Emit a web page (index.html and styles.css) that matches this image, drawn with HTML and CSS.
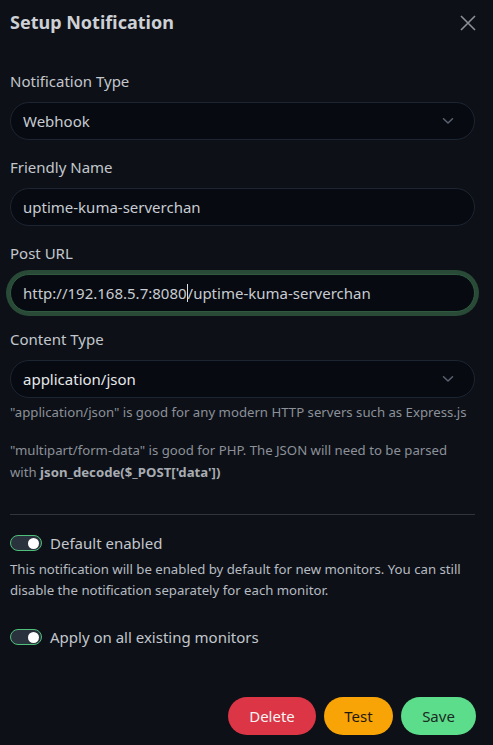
FILE: index.html
```html
<!DOCTYPE html>
<html lang="en">
<head>
<meta charset="utf-8">
<title>Setup Notification</title>
<link rel="stylesheet" href="styles.css">
</head>
<body>
<div class="modal">
  <div class="modal-header">
    <h5 class="modal-title">Setup Notification</h5>
    <button class="btn-close" aria-label="Close">
      <svg width="16" height="16" viewBox="0 0 16 16"><path d="M1 1L15 15M15 1L1 15" stroke="#8b8f96" stroke-width="1.6" fill="none"/></svg>
    </button>
  </div>
  <div class="modal-body">
    <div class="group">
      <label class="form-label">Notification Type</label>
      <div class="select">
        <span>Webhook</span>
        <svg class="chev" width="12" height="8" viewBox="0 0 12 8"><path d="M1.5 1.8L6 6L10.5 1.8" stroke="#5b6270" stroke-width="1.5" fill="none" stroke-linecap="round" stroke-linejoin="round"/></svg>
      </div>
    </div>
    <div class="group">
      <label class="form-label">Friendly Name</label>
      <div class="input">uptime-kuma-serverchan</div>
    </div>
    <div class="group">
      <label class="form-label">Post URL</label>
      <div class="input focus">http://192.168.5.7:8080<span class="caret"></span>/uptime-kuma-serverchan</div>
    </div>
    <div class="group">
      <label class="form-label">Content Type</label>
      <div class="select">
        <span class="bright">application/json</span>
        <svg class="chev" width="12" height="8" viewBox="0 0 12 8"><path d="M1.5 1.8L6 6L10.5 1.8" stroke="#5b6270" stroke-width="1.5" fill="none" stroke-linecap="round" stroke-linejoin="round"/></svg>
      </div>
      <div class="form-text first">"application/json" is good for any modern HTTP servers such as Express.js</div>
      <div class="form-text">"multipart/form-data" is good for PHP. The JSON will need to be parsed with <strong>json_decode($_POST['data'])</strong></div>
    </div>
    <hr class="divider">
    <div class="switch-row">
      <span class="switch"><span class="knob"></span></span>
      <span class="switch-label">Default enabled</span>
    </div>
    <div class="switch-help">This notification will be enabled by default for new monitors. You can still disable the notification separately for each monitor.</div>
    <div class="switch-row second">
      <span class="switch"><span class="knob"></span></span>
      <span class="switch-label">Apply on all existing monitors</span>
    </div>
  </div>
  <div class="modal-footer">
    <button class="btn btn-danger">Delete</button>
    <button class="btn btn-warning">Test</button>
    <button class="btn btn-primary">Save</button>
  </div>
</div>
</body>
</html>
```

FILE: styles.css
```css
* { box-sizing: border-box; }
html, body {
  margin: 0;
  padding: 0;
  background: #0d1117;
  height: 745px;
  overflow: hidden;
}
body {
  font-family: "Segoe UI", "Noto Sans", "Open Sans", sans-serif;
  color: #c8ccd2;
  font-size: 16px;
  line-height: 1.5;
}
.modal {
  width: 493px;
  height: 745px;
  padding: 0 18px 0 10px;
  display: flex;
  flex-direction: column;
}
.modal-header {
  display: flex;
  align-items: center;
  justify-content: space-between;
  height: 45px;
}
.modal-title {
  margin: 0;
  font-size: 18px;
  font-weight: 700;
  color: #cdd0d5;
  line-height: 1.2;
}
.btn-close {
  background: none;
  border: 0;
  padding: 0;
  margin-right: -1px;
  width: 16px;
  height: 16px;
  display: flex;
}
.modal-body { padding-top: 25px; }
.group { margin-bottom: 16px; }
.form-label {
  display: block;
  margin-bottom: 8px;
  height: 24px;
  font-size: 15px;
  color: #c3c7cd;
}
.select, .input {
  height: 38px;
  border: 1px solid #1d2532;
  border-radius: 19px;
  background: #070a10;
  display: flex;
  align-items: center;
  padding: 0 12px;
  font-size: 15px;
  color: #c8ccd2;
  white-space: nowrap;
}
.select { justify-content: space-between; }
.select .chev { margin-right: 8px; }
.bright { color: #e6e8eb; }
.input.focus {
  box-shadow: 0 0 0 4px #284a37;
  border-color: #2f5a40;
}
.caret {
  display: inline-block;
  width: 1px;
  height: 18px;
  background: #e0e0e0;
  vertical-align: -4px;
}
.form-text {
  font-size: 13.2px;
  color: #8c9099;
  line-height: 22px;
}
.form-text.first { margin-top: 3px; margin-bottom: 16px; }
.form-text strong { color: #a8acb3; font-weight: 700; }
.divider {
  border: 0;
  border-top: 1px solid #30353d;
  margin: 31px 0 0;
}
.switch-row {
  display: flex;
  align-items: center;
  gap: 8px;
  margin-top: 16px;
  height: 24px;
}
.switch-row.second { margin-top: 24px; }
.switch {
  width: 32px;
  height: 16px;
  border: 1px solid #4fc07a;
  border-radius: 8px;
  background: #2a323d;
  display: flex;
  align-items: center;
  justify-content: flex-end;
  padding-right: 2px;
}
.knob {
  width: 11px;
  height: 11px;
  border-radius: 50%;
  background: #fff;
}
.switch-label { font-size: 15px; color: #c3c7cd; }
.switch-help {
  font-size: 13.2px;
  color: #b7bbc2;
  line-height: 21px;
  margin-top: 4px;
}
.modal-footer {
  margin-top: auto;
  margin-bottom: 10px;
  display: flex;
  justify-content: flex-end;
  gap: 8px;
  margin-right: -1px;
}
.btn {
  height: 38px;
  border: 0;
  border-radius: 19px;
  font-family: inherit;
  font-size: 15px;
  padding: 0 20px;
}
.btn-danger { background: #dc3545; color: #f4f4f4; width: 88px; }
.btn-warning { background: #f8a306; color: #1f1a10; width: 69px; }
.btn-primary { background: #5cdd8b; color: #1b2a22; width: 75px; }
```
